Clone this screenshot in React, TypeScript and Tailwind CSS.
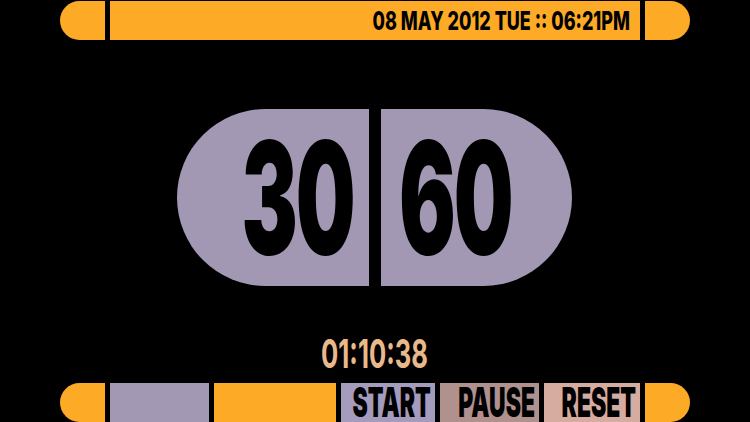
const orange = "bg-[#fdaa26]";

function Cap({ side }: { side: "left" | "right" }) {
  return (
    <div
      className={`h-full w-[45px] shrink-0 ${orange} ${
        side === "left" ? "rounded-l-full" : "rounded-r-full"
      }`}
    />
  );
}

function Button({
  label,
  width,
  color,
}: {
  label: string;
  width: string;
  color: string;
}) {
  return (
    <button
      type="button"
      className={`flex h-full shrink-0 items-end justify-end pr-[4px] pb-[5px] ${width} ${color}`}
    >
      <span className="shrink-0 origin-right scale-x-[0.56] whitespace-nowrap text-[41px] leading-[30px] font-black text-black">
        {label}
      </span>
    </button>
  );
}

export default function App() {
  return (
    <div
      className="flex h-[422px] w-[750px] flex-col overflow-hidden bg-black"
      style={{ fontFamily: "Inter, 'Liberation Sans', sans-serif" }}
    >
      {/* top bar */}
      <div className="mt-px flex h-[39px] gap-[5px] px-[60px]">
        <Cap side="left" />
        <div className={`flex flex-1 items-center justify-end pr-[10px] ${orange}`}>
          <span className="shrink-0 origin-right scale-x-[0.69] whitespace-nowrap text-[26px] leading-none font-extrabold text-black">
            08 MAY 2012 TUE :: 06:21PM
          </span>
        </div>
        <Cap side="right" />
      </div>

      {/* counter pill */}
      <div className="mt-[69px] ml-[177px] flex h-[177px] gap-[12px]">
        <div className="flex w-[192px] items-center justify-end rounded-l-full bg-[#a298b4] pr-[16px]">
          <span className="shrink-0 origin-right scale-x-[0.54] text-[156px] leading-none font-black tracking-tight text-black">
            30
          </span>
        </div>
        <div className="flex w-[191px] items-center justify-start rounded-r-full bg-[#a298b4] pl-[18px]">
          <span className="shrink-0 origin-left scale-x-[0.54] text-[156px] leading-none font-black tracking-tight text-black">
            60
          </span>
        </div>
      </div>

      {/* elapsed */}
      <div className="mt-[48px] flex justify-center">
        <span className="shrink-0 scale-x-[0.64] text-[40px] leading-[40px] font-bold text-[#e8b98b]">
          01:10:38
        </span>
      </div>

      {/* bottom bar */}
      <div className="mt-auto flex h-[39px] gap-[5px] px-[60px]">
        <Cap side="left" />
        <div className="h-full w-[99px] shrink-0 bg-[#a298b4]" />
        <div className={`h-full w-[122px] shrink-0 ${orange}`} />
        <Button label="START" width="w-[94px]" color="bg-[#a49bbd]" />
        <Button label="PAUSE" width="w-[99px]" color="bg-[#b0918e]" />
        <Button label="RESET" width="w-[96px]" color="bg-[#d6aca1]" />
        <Cap side="right" />
      </div>
    </div>
  );
}
